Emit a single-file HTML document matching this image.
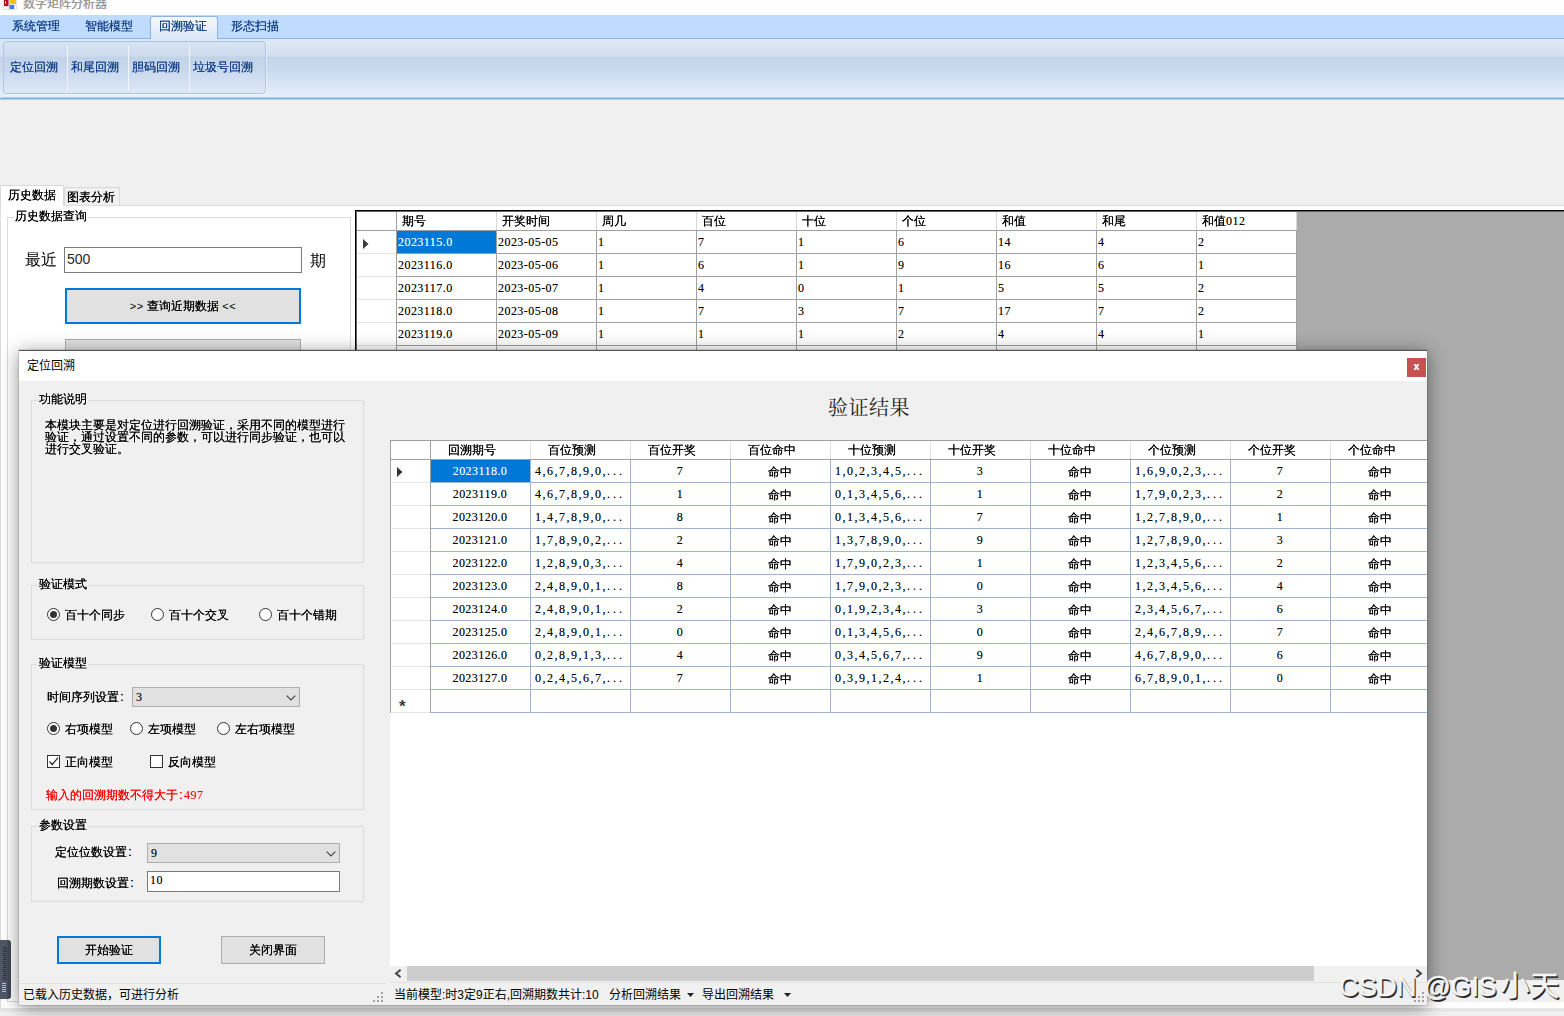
<!DOCTYPE html>
<html lang="zh-CN"><head><meta charset="utf-8"><title>数字矩阵分析器</title>
<style>
*{box-sizing:border-box}
html,body{margin:0;padding:0}
body{width:1564px;height:1016px;position:relative;overflow:hidden;background:#f0f0f0;font:12px/12px "Liberation Sans","WenQuanYi Zen Hei",sans-serif;color:#000;text-shadow:0 0 0 currentColor}
.a{position:absolute}
.t{position:absolute;white-space:nowrap;line-height:14px;height:14px}
.num{font-family:"Liberation Serif","WenQuanYi Zen Hei",serif;letter-spacing:.45px;margin-top:-1px;text-shadow:0 0 0 rgba(0,0,0,.4)}
.nl{font-family:"Liberation Serif","WenQuanYi Zen Hei",serif;letter-spacing:1.5px;margin-top:-1px;text-shadow:0 0 0 rgba(0,0,0,.4)}
.d{letter-spacing:3px}
.ab{text-shadow:none;letter-spacing:0.5px;font-size:11px}
.c{display:inline-block;width:6px;text-align:center}
span.num{margin-top:0}
/* ribbon */
#title{left:0;top:0;width:1564px;height:15px;background:#fff}
#title .t{left:23px;top:-3px;font:12px/14px "Liberation Sans","Noto Sans CJK SC",sans-serif;color:#9a9a9a}
#rtabs{left:0;top:15px;width:1564px;height:23px;background:#bfdbff}
#rtabs .t{top:5px;color:#15428b}
#rsel{left:150px;top:16px;width:68px;height:23px;border:1px solid #8db2e3;border-bottom:0;border-radius:3px 3px 0 0;background:linear-gradient(#f4f9ff,#dbe7f7)}
#rpanel{left:0;top:38px;width:1564px;height:60px;border-top:1px solid #8db2e3;border-bottom:1px solid #9adcec;border-radius:0 0 0 3px;
 background:linear-gradient(#dfe9f6 0,#d2dff0 17px,#c4d5ea 18px,#c9d9ed 30px,#e4effc 58px)}
#rline{left:0;top:98px;width:1564px;height:2px;background:linear-gradient(#8da8d2 0,#8da8d2 1px,#bccbe4 1px,#bccbe4 2px)}
#rgroup{left:3px;top:41px;width:263px;height:53px;border:1px solid #aec4e2;border-radius:3px;
 background:linear-gradient(#d8e3f2 0,#cddcee 14px,#c2d3e8 15px,#c8d8ec 28px,#dce8f8 51px);box-shadow:1px 1px 0 rgba(255,255,255,.55)}
.rsep{top:46px;width:1px;height:44px;background:#f2f6fc}
.rbtn{top:61px;color:#15428b}
/* main tab */
.mtab{border:1px solid #d9d9d9;border-bottom:0;background:#f0f0f0}
.mtab.sel{background:#fff}
#tabline{left:0;top:205px;width:1564px;height:1px;background:#dcdcdc}
.gb{border:1px solid #dcdcdc}
.gbl{background:#f0f0f0;padding:0 1px}
.gbl.w{background:#fff}
.btn{background:#e1e1e1;border:1px solid #adadad;text-align:center}
.btn.f{border:2px solid #0078d7}
.tb{background:#fff;border:1px solid #7a7a7a}
.cb{background:#e1e1e1;border:1px solid #adadad}
.radio{width:13px;height:13px;border:1px solid #333;border-radius:50%;background:#fff}
.radio.on::after{content:"";position:absolute;left:2px;top:2px;width:7px;height:7px;border-radius:50%;background:#333}
.chk{width:13px;height:13px;border:1px solid #333;background:#fff}
/* grids */
.yh{font:12px/16px "Liberation Sans","Noto Sans CJK SC",sans-serif;height:16px;text-shadow:none}
.yh14{font:14px/18px "Liberation Sans","Noto Sans CJK SC",sans-serif;height:18px;text-shadow:none}
.ttl{font:20px/26px "Liberation Serif","Noto Serif CJK SC",serif;height:26px;letter-spacing:0.5px;color:#1a1a1a;text-shadow:none}
.wm{font:28px/34px "Liberation Sans","Noto Sans CJK SC",sans-serif;height:34px;color:#f6f6f6;-webkit-text-stroke:.4px #f6f6f6;text-shadow:1px 1px 1px #222,1.5px 1.5px 0 #333}
.wm span{position:absolute;top:0;transform-origin:0 0}
.w1{left:0;transform:scaleX(.975)}
.w2{left:85px;transform:scaleX(.945)}
.w3{left:160.5px;transform:scaleX(1.06)}
.hc{position:absolute;background:#fff;height:18px;top:0;border-right:1px solid #e2e2e2;line-height:18px;white-space:nowrap}
</style></head>
<body>
<div class="a" id="title"><svg class="a" style="left:3px;top:0" width="14" height="10" viewBox="0 0 14 10"><rect x="0" y="0" width="14" height="10" fill="#e4e4e4"/><rect x="1" y="0" width="4.5" height="6" fill="#b01818"/><rect x="2" y="1.5" width="1" height="2" fill="#fff"/><rect x="6.5" y="0" width="6.5" height="4" fill="#f2c318"/><rect x="1" y="7" width="2" height="2" fill="#fff"/><rect x="3.6" y="7" width="2" height="2" fill="#fff"/><rect x="6.5" y="5" width="4.8" height="4" fill="#3f7fe0"/><rect x="11.6" y="5" width="1.4" height="4" fill="#fff"/></svg><div class="t">数字矩阵分析器</div></div>
<div class="a" id="rtabs"></div>
<div class="a" id="rpanel"></div><div class="a" id="rline"></div>
<div class="a" id="rsel"></div>
<div class="t " style="left:12px;top:19px;color:#15428b">系统管理</div>
<div class="t " style="left:85px;top:19px;color:#15428b">智能模型</div>
<div class="t " style="left:159px;top:19px;color:#15428b">回溯验证</div>
<div class="t " style="left:231px;top:19px;color:#15428b">形态扫描</div>
<div class="a" id="rgroup"></div>
<div class="a rsep" style="left:67px"></div>
<div class="a rsep" style="left:128px"></div>
<div class="a rsep" style="left:189px"></div>
<div class="t " style="left:10px;top:60px;color:#15428b">定位回溯</div>
<div class="t " style="left:71px;top:60px;color:#15428b">和尾回溯</div>
<div class="t " style="left:132px;top:60px;color:#15428b">胆码回溯</div>
<div class="t " style="left:193px;top:60px;color:#15428b">垃圾号回溯</div>
<div class="a" style="left:0px;top:205px;width:1564px;height:804px;background:#fff;border:1px solid #dcdcdc;border-right:0;border-bottom-color:#e2e2e2"></div>
<div class="a" style="left:0;top:1010px;width:1564px;height:1px;background:#dcdcdc"></div>
<div class="a mtab sel" style="left:0px;top:185px;width:64px;height:21px;"></div>
<div class="a mtab" style="left:64px;top:187px;width:56px;height:18px;"></div>
<div class="t " style="left:8px;top:188px;">历史数据</div>
<div class="t " style="left:67px;top:190px;">图表分析</div>
<div class="a gb" style="left:7px;top:217px;width:344px;height:785px;"></div>
<div class="t gbl w" style="left:14px;top:209px;">历史数据查询</div>
<div class="t " style="left:25px;top:251px;font-size:16px;line-height:18px;height:18px;text-shadow:none">最近</div>
<div class="a tb" style="left:64px;top:247px;width:238px;height:26px;"></div>
<div class="t yh14" style="left:67px;top:250px;color:#2a2a2a">500</div>
<div class="t " style="left:310px;top:252px;font-size:16px;line-height:18px;height:18px;text-shadow:none">期</div>
<div class="a btn f" style="left:65px;top:288px;width:236px;height:36px;line-height:32px"><span class="ab">&gt;&gt;</span> 查询近期数据 <span class="ab">&lt;&lt;</span></div>
<div class="a btn" style="left:65px;top:339px;width:236px;height:36px;"></div>
<div class="a" style="left:355px;top:210px;width:1209px;height:770px;background:#ababab"></div>
<div class="a" style="left:355px;top:210px;width:1209px;height:1px;background:#000"></div>
<div class="a" style="left:355px;top:211px;width:1209px;height:1px;background:#646464"></div>
<div class="a" style="left:355px;top:210px;width:1px;height:770px;background:#000"></div>
<div class="a" style="left:356px;top:211px;width:1px;height:769px;background:#646464"></div>
<div class="a" style="left:357px;top:212px;width:940px;height:157px;background:#fff"></div>
<div class="a" style="left:357px;top:230px;width:940px;height:1px;background:#a0a0a0"></div>
<div class="a" style="left:396px;top:212px;width:1px;height:157px;background:#a0a0a0"></div>
<div class="a" style="left:496px;top:212px;width:1px;height:18px;background:#d8d8d8"></div>
<div class="a" style="left:496px;top:230px;width:1px;height:139px;background:#a0a0a0"></div>
<div class="t " style="left:402px;top:214px;">期号</div>
<div class="a" style="left:596px;top:212px;width:1px;height:18px;background:#d8d8d8"></div>
<div class="a" style="left:596px;top:230px;width:1px;height:139px;background:#a0a0a0"></div>
<div class="t " style="left:502px;top:214px;">开奖时间</div>
<div class="a" style="left:696px;top:212px;width:1px;height:18px;background:#d8d8d8"></div>
<div class="a" style="left:696px;top:230px;width:1px;height:139px;background:#a0a0a0"></div>
<div class="t " style="left:602px;top:214px;">周几</div>
<div class="a" style="left:796px;top:212px;width:1px;height:18px;background:#d8d8d8"></div>
<div class="a" style="left:796px;top:230px;width:1px;height:139px;background:#a0a0a0"></div>
<div class="t " style="left:702px;top:214px;">百位</div>
<div class="a" style="left:896px;top:212px;width:1px;height:18px;background:#d8d8d8"></div>
<div class="a" style="left:896px;top:230px;width:1px;height:139px;background:#a0a0a0"></div>
<div class="t " style="left:802px;top:214px;">十位</div>
<div class="a" style="left:996px;top:212px;width:1px;height:18px;background:#d8d8d8"></div>
<div class="a" style="left:996px;top:230px;width:1px;height:139px;background:#a0a0a0"></div>
<div class="t " style="left:902px;top:214px;">个位</div>
<div class="a" style="left:1096px;top:212px;width:1px;height:18px;background:#d8d8d8"></div>
<div class="a" style="left:1096px;top:230px;width:1px;height:139px;background:#a0a0a0"></div>
<div class="t " style="left:1002px;top:214px;">和值</div>
<div class="a" style="left:1196px;top:212px;width:1px;height:18px;background:#d8d8d8"></div>
<div class="a" style="left:1196px;top:230px;width:1px;height:139px;background:#a0a0a0"></div>
<div class="t " style="left:1102px;top:214px;">和尾</div>
<div class="a" style="left:1296px;top:212px;width:1px;height:18px;background:#d8d8d8"></div>
<div class="a" style="left:1296px;top:230px;width:1px;height:139px;background:#a0a0a0"></div>
<div class="t " style="left:1202px;top:214px;">和值<span class="num">012</span></div>
<div class="a" style="left:397px;top:253px;width:900px;height:1px;background:#a0a0a0"></div>
<div class="a" style="left:357px;top:253px;width:39px;height:1px;background:#e4e4e4"></div>
<div class="a" style="left:397px;top:231px;width:99px;height:22px;background:#0078d7"></div>
<div class="t num" style="left:398px;top:236px;color:#fff;text-shadow:0 0 0 rgba(255,255,255,.4)">2023115.0</div>
<div class="t num" style="left:498px;top:236px;">2023-05-05</div>
<div class="t num" style="left:598px;top:236px;">1</div>
<div class="t num" style="left:698px;top:236px;">7</div>
<div class="t num" style="left:798px;top:236px;">1</div>
<div class="t num" style="left:898px;top:236px;">6</div>
<div class="t num" style="left:998px;top:236px;">14</div>
<div class="t num" style="left:1098px;top:236px;">4</div>
<div class="t num" style="left:1198px;top:236px;">2</div>
<div class="a" style="left:397px;top:276px;width:900px;height:1px;background:#a0a0a0"></div>
<div class="a" style="left:357px;top:276px;width:39px;height:1px;background:#e4e4e4"></div>
<div class="t num" style="left:398px;top:259px;">2023116.0</div>
<div class="t num" style="left:498px;top:259px;">2023-05-06</div>
<div class="t num" style="left:598px;top:259px;">1</div>
<div class="t num" style="left:698px;top:259px;">6</div>
<div class="t num" style="left:798px;top:259px;">1</div>
<div class="t num" style="left:898px;top:259px;">9</div>
<div class="t num" style="left:998px;top:259px;">16</div>
<div class="t num" style="left:1098px;top:259px;">6</div>
<div class="t num" style="left:1198px;top:259px;">1</div>
<div class="a" style="left:397px;top:299px;width:900px;height:1px;background:#a0a0a0"></div>
<div class="a" style="left:357px;top:299px;width:39px;height:1px;background:#e4e4e4"></div>
<div class="t num" style="left:398px;top:282px;">2023117.0</div>
<div class="t num" style="left:498px;top:282px;">2023-05-07</div>
<div class="t num" style="left:598px;top:282px;">1</div>
<div class="t num" style="left:698px;top:282px;">4</div>
<div class="t num" style="left:798px;top:282px;">0</div>
<div class="t num" style="left:898px;top:282px;">1</div>
<div class="t num" style="left:998px;top:282px;">5</div>
<div class="t num" style="left:1098px;top:282px;">5</div>
<div class="t num" style="left:1198px;top:282px;">2</div>
<div class="a" style="left:397px;top:322px;width:900px;height:1px;background:#a0a0a0"></div>
<div class="a" style="left:357px;top:322px;width:39px;height:1px;background:#e4e4e4"></div>
<div class="t num" style="left:398px;top:305px;">2023118.0</div>
<div class="t num" style="left:498px;top:305px;">2023-05-08</div>
<div class="t num" style="left:598px;top:305px;">1</div>
<div class="t num" style="left:698px;top:305px;">7</div>
<div class="t num" style="left:798px;top:305px;">3</div>
<div class="t num" style="left:898px;top:305px;">7</div>
<div class="t num" style="left:998px;top:305px;">17</div>
<div class="t num" style="left:1098px;top:305px;">7</div>
<div class="t num" style="left:1198px;top:305px;">2</div>
<div class="a" style="left:397px;top:345px;width:900px;height:1px;background:#a0a0a0"></div>
<div class="a" style="left:357px;top:345px;width:39px;height:1px;background:#e4e4e4"></div>
<div class="t num" style="left:398px;top:328px;">2023119.0</div>
<div class="t num" style="left:498px;top:328px;">2023-05-09</div>
<div class="t num" style="left:598px;top:328px;">1</div>
<div class="t num" style="left:698px;top:328px;">1</div>
<div class="t num" style="left:798px;top:328px;">1</div>
<div class="t num" style="left:898px;top:328px;">2</div>
<div class="t num" style="left:998px;top:328px;">4</div>
<div class="t num" style="left:1098px;top:328px;">4</div>
<div class="t num" style="left:1198px;top:328px;">1</div>
<div class="a" style="left:397px;top:368px;width:900px;height:1px;background:#a0a0a0"></div>
<div class="a" style="left:357px;top:368px;width:39px;height:1px;background:#e4e4e4"></div>
<div class="t num" style="left:398px;top:351px;">2023120.0</div>
<div class="t num" style="left:498px;top:351px;">2023-05-10</div>
<div class="t num" style="left:598px;top:351px;">1</div>
<div class="t num" style="left:698px;top:351px;">8</div>
<div class="t num" style="left:798px;top:351px;">7</div>
<div class="t num" style="left:898px;top:351px;">1</div>
<div class="t num" style="left:998px;top:351px;">16</div>
<div class="t num" style="left:1098px;top:351px;">6</div>
<div class="t num" style="left:1198px;top:351px;">1</div>
<svg class="a" style="left:362.5px;top:238.5px" width="6" height="10"><path d="M0 0L5.5 5L0 10Z" fill="#3c3c3c"/></svg>
<div class="a" style="left:357px;top:980px;width:1207px;height:22px;background:#f0f0f0"></div>
<div class="a" id="dlg" style="left:19px;top:350px;width:1408px;height:655px;background:#f0f0f0;border-top:1px solid #555;box-shadow:0 0 0 1px rgba(0,0,0,.10),0 3px 18px 0 rgba(0,0,0,.46)">
<div class="a" style="left:0;top:0;width:1408px;height:30px;background:#fff"></div>
<div class="a" style="left:1388px;top:7px;width:19px;height:19px;background:#c75050;color:#fff;font:bold 10px/18px 'Liberation Sans',sans-serif;text-align:center">x</div>
</div>
<div class="t yh" style="left:27px;top:358px;">定位回溯</div>
<div class="a gb" style="left:31px;top:400px;width:333px;height:163px"></div>
<div class="t gbl" style="left:38px;top:392px;">功能说明</div>
<div class="a" style="left:45px;top:419px;width:310px;line-height:12px;white-space:nowrap">本模块主要是对定位进行回溯验证，采用不同的模型进行<br>验证，通过设置不同的参数，可以进行同步验证，也可以<br>进行交叉验证。</div>
<div class="a gb" style="left:31px;top:585px;width:333px;height:55px"></div>
<div class="t gbl" style="left:38px;top:577px;">验证模式</div>
<div class="a radio on" style="left:47px;top:608px"></div>
<div class="t " style="left:65px;top:608px;">百十个同步</div>
<div class="a radio" style="left:151px;top:608px"></div>
<div class="t " style="left:169px;top:608px;">百十个交叉</div>
<div class="a radio" style="left:259px;top:608px"></div>
<div class="t " style="left:277px;top:608px;">百十个错期</div>
<div class="a gb" style="left:31px;top:664px;width:333px;height:146px"></div>
<div class="t gbl" style="left:38px;top:656px;">验证模型</div>
<div class="t " style="left:47px;top:690px;">时间序列设置<span class="c">:</span></div>
<div class="a cb" style="left:132px;top:687px;width:168px;height:20px"></div>
<div class="t num" style="left:136px;top:691px;">3</div>
<svg class="a" style="left:286px;top:695px" width="10" height="6" viewBox="0 0 10 6"><path d="M0.7 0.7L5 5L9.3 0.7" fill="none" stroke="#444" stroke-width="1.2"/></svg>
<div class="a radio on" style="left:47px;top:722px"></div>
<div class="t " style="left:65px;top:722px;">右项模型</div>
<div class="a radio" style="left:130px;top:722px"></div>
<div class="t " style="left:148px;top:722px;">左项模型</div>
<div class="a radio" style="left:217px;top:722px"></div>
<div class="t " style="left:235px;top:722px;">左右项模型</div>
<div class="a chk" style="left:47px;top:755px"><svg width="11" height="11" viewBox="0 0 11 11" style="display:block"><path d="M1.5 5.5L4.3 8.5L10 1.6" fill="none" stroke="#222" stroke-width="1.2"/></svg></div>
<div class="t " style="left:65px;top:755px;">正向模型</div>
<div class="a chk" style="left:150px;top:755px"></div>
<div class="t " style="left:168px;top:755px;">反向模型</div>
<div class="t " style="left:46px;top:788px;color:#f00">输入的回溯期数不得大于<span class="c">:</span><span class="num" style="text-shadow:0 0 0 rgba(255,0,0,.4)">497</span></div>
<div class="a gb" style="left:31px;top:826px;width:333px;height:76px"></div>
<div class="t gbl" style="left:38px;top:818px;">参数设置</div>
<div class="t " style="left:55px;top:845px;">定位位数设置<span class="c">:</span></div>
<div class="a cb" style="left:147px;top:843px;width:193px;height:20px"></div>
<div class="t num" style="left:151px;top:847px;">9</div>
<svg class="a" style="left:326px;top:851px" width="10" height="6" viewBox="0 0 10 6"><path d="M0.7 0.7L5 5L9.3 0.7" fill="none" stroke="#444" stroke-width="1.2"/></svg>
<div class="t " style="left:57px;top:876px;">回溯期数设置<span class="c">:</span></div>
<div class="a tb" style="left:147px;top:871px;width:193px;height:21px"></div>
<div class="t num" style="left:150px;top:874px;">10</div>
<div class="a btn f" style="left:57px;top:936px;width:104px;height:28px;line-height:24px">开始验证</div>
<div class="a btn" style="left:221px;top:936px;width:104px;height:28px;line-height:26px">关闭界面</div>
<div class="a" style="left:19px;top:983px;width:367px;height:1px;background:#e3e3e3"></div>
<div class="t yh" style="left:23px;top:987px;">已载入历史数据，可进行分析</div>
<svg class="a" style="left:373px;top:992px" width="11" height="11" viewBox="0 0 11 11" fill="#a0a0a0"><rect x="8" y="0" width="2" height="2"/><rect x="4" y="4" width="2" height="2"/><rect x="8" y="4" width="2" height="2"/><rect x="0" y="8" width="2" height="2"/><rect x="4" y="8" width="2" height="2"/><rect x="8" y="8" width="2" height="2"/></svg>
<div class="t ttl" style="left:828px;top:395px;">验证结果</div>
<div class="a" style="left:390px;top:440px;width:1037px;height:526px;background:#fff;border-top:1px solid #a0a0a0"></div>
<div class="a" style="left:390px;top:440px;width:1px;height:273px;background:#a0a0a0"></div>
<div class="a" style="left:391px;top:459px;width:1036px;height:1px;background:#a0a0a0"></div>
<div class="a" style="left:430px;top:441px;width:1px;height:272px;background:#a0a0a0"></div>
<div class="a" style="left:530px;top:441px;width:1px;height:18px;background:#e2e2e2"></div>
<div class="a" style="left:530px;top:460px;width:1px;height:253px;background:#a0b5d3"></div>
<div class="t " style="left:448px;top:443px;">回溯期号</div>
<div class="a" style="left:630px;top:441px;width:1px;height:18px;background:#e2e2e2"></div>
<div class="a" style="left:630px;top:460px;width:1px;height:253px;background:#a0b5d3"></div>
<div class="t " style="left:548px;top:443px;">百位预测</div>
<div class="a" style="left:730px;top:441px;width:1px;height:18px;background:#e2e2e2"></div>
<div class="a" style="left:730px;top:460px;width:1px;height:253px;background:#a0b5d3"></div>
<div class="t " style="left:648px;top:443px;">百位开奖</div>
<div class="a" style="left:830px;top:441px;width:1px;height:18px;background:#e2e2e2"></div>
<div class="a" style="left:830px;top:460px;width:1px;height:253px;background:#a0b5d3"></div>
<div class="t " style="left:748px;top:443px;">百位命中</div>
<div class="a" style="left:930px;top:441px;width:1px;height:18px;background:#e2e2e2"></div>
<div class="a" style="left:930px;top:460px;width:1px;height:253px;background:#a0b5d3"></div>
<div class="t " style="left:848px;top:443px;">十位预测</div>
<div class="a" style="left:1030px;top:441px;width:1px;height:18px;background:#e2e2e2"></div>
<div class="a" style="left:1030px;top:460px;width:1px;height:253px;background:#a0b5d3"></div>
<div class="t " style="left:948px;top:443px;">十位开奖</div>
<div class="a" style="left:1130px;top:441px;width:1px;height:18px;background:#e2e2e2"></div>
<div class="a" style="left:1130px;top:460px;width:1px;height:253px;background:#a0b5d3"></div>
<div class="t " style="left:1048px;top:443px;">十位命中</div>
<div class="a" style="left:1230px;top:441px;width:1px;height:18px;background:#e2e2e2"></div>
<div class="a" style="left:1230px;top:460px;width:1px;height:253px;background:#a0b5d3"></div>
<div class="t " style="left:1148px;top:443px;">个位预测</div>
<div class="a" style="left:1330px;top:441px;width:1px;height:18px;background:#e2e2e2"></div>
<div class="a" style="left:1330px;top:460px;width:1px;height:253px;background:#a0b5d3"></div>
<div class="t " style="left:1248px;top:443px;">个位开奖</div>
<div class="t " style="left:1348px;top:443px;">个位命中</div>
<div class="a" style="left:431px;top:482px;width:996px;height:1px;background:#a0b5d3"></div>
<div class="a" style="left:392px;top:482px;width:38px;height:1px;background:#e6e6e6"></div>
<div class="a" style="left:431px;top:460px;width:99px;height:22px;background:#0078d7"></div>
<div class="t num" style="left:431px;top:465px;width:98px;text-align:center;color:#fff;text-shadow:0 0 0 rgba(255,255,255,.4);">2023118.0</div>
<div class="t nl" style="left:535px;top:465px;">4,6,7,8,9,0,<span class="d">...</span></div>
<div class="t num" style="left:631px;top:465px;width:98px;text-align:center;">7</div>
<div class="t " style="left:731px;top:465px;width:98px;text-align:center;">命中</div>
<div class="t nl" style="left:835px;top:465px;">1,0,2,3,4,5,<span class="d">...</span></div>
<div class="t num" style="left:931px;top:465px;width:98px;text-align:center;">3</div>
<div class="t " style="left:1031px;top:465px;width:98px;text-align:center;">命中</div>
<div class="t nl" style="left:1135px;top:465px;">1,6,9,0,2,3,<span class="d">...</span></div>
<div class="t num" style="left:1231px;top:465px;width:98px;text-align:center;">7</div>
<div class="t " style="left:1331px;top:465px;width:98px;text-align:center;">命中</div>
<div class="a" style="left:431px;top:505px;width:996px;height:1px;background:#a0b5d3"></div>
<div class="a" style="left:392px;top:505px;width:38px;height:1px;background:#e6e6e6"></div>
<div class="t num" style="left:431px;top:488px;width:98px;text-align:center;">2023119.0</div>
<div class="t nl" style="left:535px;top:488px;">4,6,7,8,9,0,<span class="d">...</span></div>
<div class="t num" style="left:631px;top:488px;width:98px;text-align:center;">1</div>
<div class="t " style="left:731px;top:488px;width:98px;text-align:center;">命中</div>
<div class="t nl" style="left:835px;top:488px;">0,1,3,4,5,6,<span class="d">...</span></div>
<div class="t num" style="left:931px;top:488px;width:98px;text-align:center;">1</div>
<div class="t " style="left:1031px;top:488px;width:98px;text-align:center;">命中</div>
<div class="t nl" style="left:1135px;top:488px;">1,7,9,0,2,3,<span class="d">...</span></div>
<div class="t num" style="left:1231px;top:488px;width:98px;text-align:center;">2</div>
<div class="t " style="left:1331px;top:488px;width:98px;text-align:center;">命中</div>
<div class="a" style="left:431px;top:528px;width:996px;height:1px;background:#a0b5d3"></div>
<div class="a" style="left:392px;top:528px;width:38px;height:1px;background:#e6e6e6"></div>
<div class="t num" style="left:431px;top:511px;width:98px;text-align:center;">2023120.0</div>
<div class="t nl" style="left:535px;top:511px;">1,4,7,8,9,0,<span class="d">...</span></div>
<div class="t num" style="left:631px;top:511px;width:98px;text-align:center;">8</div>
<div class="t " style="left:731px;top:511px;width:98px;text-align:center;">命中</div>
<div class="t nl" style="left:835px;top:511px;">0,1,3,4,5,6,<span class="d">...</span></div>
<div class="t num" style="left:931px;top:511px;width:98px;text-align:center;">7</div>
<div class="t " style="left:1031px;top:511px;width:98px;text-align:center;">命中</div>
<div class="t nl" style="left:1135px;top:511px;">1,2,7,8,9,0,<span class="d">...</span></div>
<div class="t num" style="left:1231px;top:511px;width:98px;text-align:center;">1</div>
<div class="t " style="left:1331px;top:511px;width:98px;text-align:center;">命中</div>
<div class="a" style="left:431px;top:551px;width:996px;height:1px;background:#a0b5d3"></div>
<div class="a" style="left:392px;top:551px;width:38px;height:1px;background:#e6e6e6"></div>
<div class="t num" style="left:431px;top:534px;width:98px;text-align:center;">2023121.0</div>
<div class="t nl" style="left:535px;top:534px;">1,7,8,9,0,2,<span class="d">...</span></div>
<div class="t num" style="left:631px;top:534px;width:98px;text-align:center;">2</div>
<div class="t " style="left:731px;top:534px;width:98px;text-align:center;">命中</div>
<div class="t nl" style="left:835px;top:534px;">1,3,7,8,9,0,<span class="d">...</span></div>
<div class="t num" style="left:931px;top:534px;width:98px;text-align:center;">9</div>
<div class="t " style="left:1031px;top:534px;width:98px;text-align:center;">命中</div>
<div class="t nl" style="left:1135px;top:534px;">1,2,7,8,9,0,<span class="d">...</span></div>
<div class="t num" style="left:1231px;top:534px;width:98px;text-align:center;">3</div>
<div class="t " style="left:1331px;top:534px;width:98px;text-align:center;">命中</div>
<div class="a" style="left:431px;top:574px;width:996px;height:1px;background:#a0b5d3"></div>
<div class="a" style="left:392px;top:574px;width:38px;height:1px;background:#e6e6e6"></div>
<div class="t num" style="left:431px;top:557px;width:98px;text-align:center;">2023122.0</div>
<div class="t nl" style="left:535px;top:557px;">1,2,8,9,0,3,<span class="d">...</span></div>
<div class="t num" style="left:631px;top:557px;width:98px;text-align:center;">4</div>
<div class="t " style="left:731px;top:557px;width:98px;text-align:center;">命中</div>
<div class="t nl" style="left:835px;top:557px;">1,7,9,0,2,3,<span class="d">...</span></div>
<div class="t num" style="left:931px;top:557px;width:98px;text-align:center;">1</div>
<div class="t " style="left:1031px;top:557px;width:98px;text-align:center;">命中</div>
<div class="t nl" style="left:1135px;top:557px;">1,2,3,4,5,6,<span class="d">...</span></div>
<div class="t num" style="left:1231px;top:557px;width:98px;text-align:center;">2</div>
<div class="t " style="left:1331px;top:557px;width:98px;text-align:center;">命中</div>
<div class="a" style="left:431px;top:597px;width:996px;height:1px;background:#a0b5d3"></div>
<div class="a" style="left:392px;top:597px;width:38px;height:1px;background:#e6e6e6"></div>
<div class="t num" style="left:431px;top:580px;width:98px;text-align:center;">2023123.0</div>
<div class="t nl" style="left:535px;top:580px;">2,4,8,9,0,1,<span class="d">...</span></div>
<div class="t num" style="left:631px;top:580px;width:98px;text-align:center;">8</div>
<div class="t " style="left:731px;top:580px;width:98px;text-align:center;">命中</div>
<div class="t nl" style="left:835px;top:580px;">1,7,9,0,2,3,<span class="d">...</span></div>
<div class="t num" style="left:931px;top:580px;width:98px;text-align:center;">0</div>
<div class="t " style="left:1031px;top:580px;width:98px;text-align:center;">命中</div>
<div class="t nl" style="left:1135px;top:580px;">1,2,3,4,5,6,<span class="d">...</span></div>
<div class="t num" style="left:1231px;top:580px;width:98px;text-align:center;">4</div>
<div class="t " style="left:1331px;top:580px;width:98px;text-align:center;">命中</div>
<div class="a" style="left:431px;top:620px;width:996px;height:1px;background:#a0b5d3"></div>
<div class="a" style="left:392px;top:620px;width:38px;height:1px;background:#e6e6e6"></div>
<div class="t num" style="left:431px;top:603px;width:98px;text-align:center;">2023124.0</div>
<div class="t nl" style="left:535px;top:603px;">2,4,8,9,0,1,<span class="d">...</span></div>
<div class="t num" style="left:631px;top:603px;width:98px;text-align:center;">2</div>
<div class="t " style="left:731px;top:603px;width:98px;text-align:center;">命中</div>
<div class="t nl" style="left:835px;top:603px;">0,1,9,2,3,4,<span class="d">...</span></div>
<div class="t num" style="left:931px;top:603px;width:98px;text-align:center;">3</div>
<div class="t " style="left:1031px;top:603px;width:98px;text-align:center;">命中</div>
<div class="t nl" style="left:1135px;top:603px;">2,3,4,5,6,7,<span class="d">...</span></div>
<div class="t num" style="left:1231px;top:603px;width:98px;text-align:center;">6</div>
<div class="t " style="left:1331px;top:603px;width:98px;text-align:center;">命中</div>
<div class="a" style="left:431px;top:643px;width:996px;height:1px;background:#a0b5d3"></div>
<div class="a" style="left:392px;top:643px;width:38px;height:1px;background:#e6e6e6"></div>
<div class="t num" style="left:431px;top:626px;width:98px;text-align:center;">2023125.0</div>
<div class="t nl" style="left:535px;top:626px;">2,4,8,9,0,1,<span class="d">...</span></div>
<div class="t num" style="left:631px;top:626px;width:98px;text-align:center;">0</div>
<div class="t " style="left:731px;top:626px;width:98px;text-align:center;">命中</div>
<div class="t nl" style="left:835px;top:626px;">0,1,3,4,5,6,<span class="d">...</span></div>
<div class="t num" style="left:931px;top:626px;width:98px;text-align:center;">0</div>
<div class="t " style="left:1031px;top:626px;width:98px;text-align:center;">命中</div>
<div class="t nl" style="left:1135px;top:626px;">2,4,6,7,8,9,<span class="d">...</span></div>
<div class="t num" style="left:1231px;top:626px;width:98px;text-align:center;">7</div>
<div class="t " style="left:1331px;top:626px;width:98px;text-align:center;">命中</div>
<div class="a" style="left:431px;top:666px;width:996px;height:1px;background:#a0b5d3"></div>
<div class="a" style="left:392px;top:666px;width:38px;height:1px;background:#e6e6e6"></div>
<div class="t num" style="left:431px;top:649px;width:98px;text-align:center;">2023126.0</div>
<div class="t nl" style="left:535px;top:649px;">0,2,8,9,1,3,<span class="d">...</span></div>
<div class="t num" style="left:631px;top:649px;width:98px;text-align:center;">4</div>
<div class="t " style="left:731px;top:649px;width:98px;text-align:center;">命中</div>
<div class="t nl" style="left:835px;top:649px;">0,3,4,5,6,7,<span class="d">...</span></div>
<div class="t num" style="left:931px;top:649px;width:98px;text-align:center;">9</div>
<div class="t " style="left:1031px;top:649px;width:98px;text-align:center;">命中</div>
<div class="t nl" style="left:1135px;top:649px;">4,6,7,8,9,0,<span class="d">...</span></div>
<div class="t num" style="left:1231px;top:649px;width:98px;text-align:center;">6</div>
<div class="t " style="left:1331px;top:649px;width:98px;text-align:center;">命中</div>
<div class="a" style="left:431px;top:689px;width:996px;height:1px;background:#a0b5d3"></div>
<div class="a" style="left:392px;top:689px;width:38px;height:1px;background:#e6e6e6"></div>
<div class="t num" style="left:431px;top:672px;width:98px;text-align:center;">2023127.0</div>
<div class="t nl" style="left:535px;top:672px;">0,2,4,5,6,7,<span class="d">...</span></div>
<div class="t num" style="left:631px;top:672px;width:98px;text-align:center;">7</div>
<div class="t " style="left:731px;top:672px;width:98px;text-align:center;">命中</div>
<div class="t nl" style="left:835px;top:672px;">0,3,9,1,2,4,<span class="d">...</span></div>
<div class="t num" style="left:931px;top:672px;width:98px;text-align:center;">1</div>
<div class="t " style="left:1031px;top:672px;width:98px;text-align:center;">命中</div>
<div class="t nl" style="left:1135px;top:672px;">6,7,8,9,0,1,<span class="d">...</span></div>
<div class="t num" style="left:1231px;top:672px;width:98px;text-align:center;">0</div>
<div class="t " style="left:1331px;top:672px;width:98px;text-align:center;">命中</div>
<div class="a" style="left:431px;top:712px;width:996px;height:1px;background:#a0b5d3"></div>
<div class="a" style="left:392px;top:712px;width:38px;height:1px;background:#e6e6e6"></div>
<svg class="a" style="left:397px;top:467px" width="6" height="10"><path d="M0 0L5.5 5L0 10Z" fill="#333"/></svg>
<div class="t " style="left:399px;top:698px;color:#3c3c3c;font:bold 17px/18px 'Liberation Sans',sans-serif;height:18px;text-shadow:none">*</div>
<div class="a" style="left:391px;top:966px;width:1036px;height:16px;background:#f0f0f0"></div>
<div class="a" style="left:407px;top:966px;width:907px;height:15px;background:#cdcdcd"></div>
<div class="a" style="left:390px;top:982px;width:1037px;height:1px;background:#e2e2e2"></div>
<svg class="a" style="left:394px;top:969px" width="8" height="9" viewBox="0 0 8 9"><path d="M6.6 0.8L2 4.5L6.6 8.2" fill="none" stroke="#444" stroke-width="1.9"/></svg>
<svg class="a" style="left:1415px;top:969px" width="8" height="9" viewBox="0 0 8 9"><path d="M1.4 0.8L6 4.5L1.4 8.2" fill="none" stroke="#444" stroke-width="1.9"/></svg>
<div class="t yh" style="left:394px;top:987px;">当前模型:时3定9正右,回溯期数共计:10</div>
<div class="t yh" style="left:609px;top:987px;">分析回溯结果</div>
<div class="t yh" style="left:702px;top:987px;">导出回溯结果</div>
<svg class="a" style="left:687px;top:993px" width="7" height="4"><path d="M0 0H7L3.5 4Z" fill="#222"/></svg>
<svg class="a" style="left:784px;top:993px" width="7" height="4"><path d="M0 0H7L3.5 4Z" fill="#222"/></svg>
<svg class="a" style="left:1414px;top:992px" width="11" height="11" viewBox="0 0 11 11" fill="#a0a0a0"><rect x="8" y="0" width="2" height="2"/><rect x="4" y="4" width="2" height="2"/><rect x="8" y="4" width="2" height="2"/><rect x="0" y="8" width="2" height="2"/><rect x="4" y="8" width="2" height="2"/><rect x="8" y="8" width="2" height="2"/></svg>
<div class="t wm" style="left:1339px;top:970px;"><span class="w1">CSDN</span><span class="w2">@GIS</span><span class="w3">小天</span></div>
<div class="a" style="left:-3px;top:940px;width:14px;height:59px;border-radius:3px;background:linear-gradient(90deg,#4f5565 0,#4f5565 10px,#3e4351 11px,#3e4351 14px)"></div>
<div class="a" style="left:3px;top:947px;width:4px;height:34px;background:repeating-linear-gradient(#30333c 0,#30333c 1px,#4f5565 1px,#4f5565 2px)"></div>
<div class="a" style="left:2px;top:983px;width:4px;height:10px;background:repeating-linear-gradient(#5aeeb0 0,#5aeeb0 1px,#4f5565 1px,#4f5565 2px)"></div>
</body></html>
